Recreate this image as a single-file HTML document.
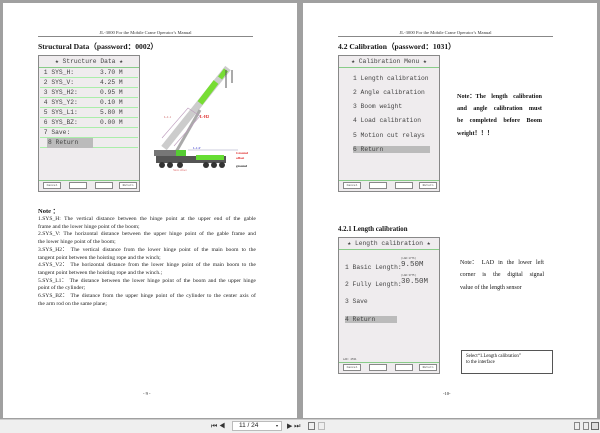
<!DOCTYPE html>
<html><head><meta charset="utf-8"><style>
*{margin:0;padding:0;box-sizing:border-box}
body{width:600px;height:433px;background:#a0a0a0;position:relative;overflow:hidden;font-family:"Liberation Serif",serif;color:#111}
.pg{position:absolute;top:3px;width:294px;height:415px;background:#fff}
.a{position:absolute;white-space:nowrap}
.hdr{position:absolute;left:35px;width:215px;top:27px;border-bottom:1px solid #888;font-size:4.6px;text-align:center;padding-bottom:1px;color:#333}
.t{font-weight:bold;font-size:7.6px}
.scr{position:absolute;width:102px;height:137px;background:#efecee;border:1px solid #888;font-family:"Liberation Mono",monospace;color:#444}
.g{position:absolute;left:0;right:0;height:1px;background:#8c8}
.btns{position:absolute;left:2px;right:2px;bottom:2px;height:7px}
.btns i{position:absolute;top:0;width:18px;height:7px;border:1px solid #888;background:#fff;font-size:3px;font-style:normal;text-align:center;line-height:5px}
.row{position:absolute;left:1px;right:1px;height:10px;border-bottom:1px solid #aea;font-size:6.3px;line-height:10px}
.hl{background:#bbb}
.note{position:absolute;left:35px;top:213px;width:218px;font-size:5.6px;line-height:7.7px;color:#222}
.note div{display:flex;justify-content:space-between;white-space:nowrap}
.tb{position:absolute;left:0;top:419px;width:600px;height:14px;background:#efefef;border-top:1px solid #ccc}
.j div{display:flex;justify-content:space-between;white-space:nowrap}
</style></head><body>
<div class="pg" style="left:3px">
<div class="hdr">JL-3000 For the Mobile Crane Operator’s Manual</div>
<div class="a t" style="left:35px;top:38px">Structural Data（password：0002）</div>
<div class="scr" style="left:35px;top:52px">
 <div class="a" style="left:0;width:100px;text-align:center;top:2px;font-size:6.3px">★ Structure Data ★</div>
 <div class="g" style="top:11px"></div>
 <div class="row" style="top:12px">&nbsp;1 SYS_H:<span class="a" style="left:60px">3.70 M</span></div>
 <div class="row" style="top:22px">&nbsp;2 SYS_V:<span class="a" style="left:60px">4.25 M</span></div>
 <div class="row" style="top:32px">&nbsp;3 SYS_H2:<span class="a" style="left:60px">0.95 M</span></div>
 <div class="row" style="top:42px">&nbsp;4 SYS_Y2:<span class="a" style="left:60px">0.10 M</span></div>
 <div class="row" style="top:52px">&nbsp;5 SYS_L1:<span class="a" style="left:60px">5.80 M</span></div>
 <div class="row" style="top:62px">&nbsp;6 SYS_BZ:<span class="a" style="left:60px">0.00 M</span></div>
 <div class="row" style="top:72px">&nbsp;7 Save:</div>
 <div class="row" style="top:82px"><span class="hl" style="display:inline-block;width:46px;margin-left:7px;padding-left:1px">8 Return</span></div>
 <div class="g" style="top:124px"></div>
 <div class="btns"><i style="left:2px">Cancel</i><i style="left:28px"></i><i style="left:54px"></i><i style="left:78px">Return</i></div>
</div>
<svg class="a" style="left:145px;top:55px" width="110" height="140" viewBox="0 0 110 140">
 <line x1="16" y1="90" x2="80" y2="10" stroke="#ccc" stroke-width="7"/>
 <line x1="52" y1="45" x2="68" y2="24" stroke="#7d3" stroke-width="6"/>
 <line x1="72" y1="20" x2="78" y2="12" stroke="#7d3" stroke-width="5"/>
 <line x1="78" y1="12" x2="78" y2="30" stroke="#555" stroke-width="1"/>
 <line x1="84" y1="12" x2="84" y2="25" stroke="#555" stroke-width="1"/>
 <line x1="28" y1="94" x2="52" y2="52" stroke="#aaa" stroke-width="3"/>
 <polyline points="14,80 40,50 52,58 26,88" fill="none" stroke="#b9b" stroke-width=".6"/>
 <text x="16" y="60" font-size="3.5" fill="#c66">L-L1</text>
 <text x="52" y="60" font-size="4" fill="#d22" font-weight="bold">L-H2</text>
 <rect x="6" y="92" width="22" height="6" fill="#777"/>
 <rect x="28" y="92" width="10" height="10" fill="#5c3"/>
 <rect x="8" y="98" width="70" height="7" fill="#555"/>
 <rect x="48" y="97" width="28" height="5" fill="#6d3"/>
 <circle cx="14" cy="107" r="3" fill="#333"/><circle cx="22" cy="107" r="3" fill="#333"/><circle cx="32" cy="107" r="3" fill="#333"/><circle cx="58" cy="107" r="3" fill="#333"/><circle cx="66" cy="107" r="3" fill="#333"/><circle cx="74" cy="107" r="3" fill="#333"/>
 <line x1="40" y1="92" x2="90" y2="92" stroke="#99b" stroke-width=".5"/>
 <text x="45" y="91" font-size="3.5" fill="#33c">L-LP</text>
 <text x="88" y="96" font-size="3.5" fill="#d22" font-weight="bold">Ground</text>
 <text x="88" y="101" font-size="3.5" fill="#d22" font-weight="bold">offset</text>
 <text x="88" y="109" font-size="3.5" fill="#222" font-weight="bold">ground</text>
 <text x="25" y="113" font-size="3" fill="#d66">Slew offset</text>
</svg>
<div class="a t" style="left:35px;top:202px;font-size:6.5px">Note ：</div>
<div class="note">
<div><span>1.SYS_H:</span><span>The</span><span>vertical</span><span>distance</span><span>between</span><span>the</span><span>hinge</span><span>point</span><span>at</span><span>the</span><span>upper</span><span>end</span><span>of</span><span>the</span><span>gable</span></div>
<div style="display:block">frame and the lower hinge point of the boom;</div>
<div><span>2.SYS_V:</span><span>The</span><span>horizontal</span><span>distance</span><span>between</span><span>the</span><span>upper</span><span>hinge</span><span>point</span><span>of</span><span>the</span><span>gable</span><span>frame</span><span>and</span></div>
<div style="display:block">the lower hinge point of the boom;</div>
<div><span>3.SYS_H2：</span><span>The</span><span>vertical</span><span>distance</span><span>from</span><span>the</span><span>lower</span><span>hinge</span><span>point</span><span>of</span><span>the</span><span>main</span><span>boom</span><span>to</span><span>the</span></div>
<div style="display:block">tangent point between the hoisting rope and the winch;</div>
<div><span>4.SYS_V2：</span><span>The</span><span>horizontal</span><span>distance</span><span>from</span><span>the</span><span>lower</span><span>hinge</span><span>point</span><span>of</span><span>the</span><span>main</span><span>boom</span><span>to</span><span>the</span></div>
<div style="display:block">tangent point between the hoisting rope and the winch.;</div>
<div><span>5.SYS_L1：</span><span>The</span><span>distance</span><span>between</span><span>the</span><span>lower</span><span>hinge</span><span>point</span><span>of</span><span>the</span><span>boom</span><span>and</span><span>the</span><span>upper</span><span>hinge</span></div>
<div style="display:block">point of the cylinder;</div>
<div><span>6.SYS_BZ：</span><span>The</span><span>distance</span><span>from</span><span>the</span><span>upper</span><span>hinge</span><span>point</span><span>of</span><span>the</span><span>cylinder</span><span>to</span><span>the</span><span>center</span><span>axis</span><span>of</span></div>
<div style="display:block">the arm rod on the same plane;</div>
</div>
<div class="a" style="left:140px;top:388px;font-size:4.5px">- 9 -</div>
</div>

<div class="pg" style="left:303px">
<div class="hdr">JL-3000 For the Mobile Crane Operator’s Manual</div>
<div class="a t" style="left:35px;top:38px">4.2 Calibration（password：1031）</div>
<div class="scr" style="left:35px;top:52px;font-size:6.3px">
 <div class="a" style="left:0;width:100px;text-align:center;top:2px">★ Calibration Menu ★</div>
 <div class="g" style="top:11px"></div>
 <div class="a" style="left:14px;top:19px">1 Length calibration</div>
 <div class="a" style="left:14px;top:33px">2 Angle calibration</div>
 <div class="a" style="left:14px;top:47px">3 Boom weight</div>
 <div class="a" style="left:14px;top:61px">4 Load calibration</div>
 <div class="a" style="left:14px;top:76px">5 Motion cut relays</div>
 <div class="a hl" style="left:14px;top:90px;width:77px;height:7px;line-height:7px">6 Return</div>
 <div class="g" style="top:124px"></div>
 <div class="btns"><i style="left:2px">Cancel</i><i style="left:28px"></i><i style="left:54px"></i><i style="left:78px">Return</i></div>
</div>
<div class="a j" style="left:154px;top:88px;font-size:6.2px;font-weight:bold;line-height:12.2px;width:85px">
<div><span>Note：The</span><span>length</span><span>calibration</span></div>
<div><span>and</span><span>angle</span><span>calibration</span><span>must</span></div>
<div><span>be</span><span>completed</span><span>before</span><span>Boom</span></div>
<div style="display:block">weight！！！</div>
</div>
<div class="a t" style="left:35px;top:223px;font-size:6.8px">4.2.1 Length calibration</div>
<div class="scr" style="left:35px;top:234px;font-size:6.3px">
 <div class="a" style="left:0;width:100px;text-align:center;top:2px">★ Length calibration ★</div>
 <div class="g" style="top:11px"></div>
 <div class="a" style="left:6px;top:26px">1 Basic Length:</div>
 <div class="a" style="left:62px;top:19px;font-size:2.5px">(LAD:1776)</div>
 <div class="a" style="left:62px;top:23px;font-size:7.5px">9.50M</div>
 <div class="a" style="left:6px;top:43px">2 Fully Length:</div>
 <div class="a" style="left:62px;top:36px;font-size:2.5px">(LAD:3775)</div>
 <div class="a" style="left:62px;top:40px;font-size:7.5px">30.50M</div>
 <div class="a" style="left:6px;top:60px">3 Save</div>
 <div class="a hl" style="left:6px;top:78px;width:52px;height:7px;line-height:7px">4 Return</div>
 <div class="a" style="left:4px;top:120px;font-size:2.5px">LAD: 2531</div>
 <div class="g" style="top:124px"></div>
 <div class="btns"><i style="left:2px">Cancel</i><i style="left:28px"></i><i style="left:54px"></i><i style="left:78px">Return</i></div>
</div>
<div class="a j" style="left:157px;top:254px;font-size:6px;line-height:12.4px;width:84px">
<div><span>Note：</span><span>LAD</span><span>in</span><span>the</span><span>lower</span><span>left</span></div>
<div><span>corner</span><span>is</span><span>the</span><span>digital</span><span>signal</span></div>
<div style="display:block">value of the length sensor</div>
</div>
<div class="a" style="left:158px;top:347px;width:92px;height:24px;border:1px solid #555;font-size:4.8px;line-height:6px;padding:3px 4px">Select“1.Length calibration”<br>to the interface</div>
<div class="a" style="left:140px;top:388px;font-size:4.5px">-10-</div>
</div>

<div class="tb">
 <div class="a" style="left:211px;top:2px;font-size:7px;color:#333">⏮&nbsp;◀</div>
 <div class="a" style="left:232px;top:1px;width:50px;height:10px;background:#fff;border:1px solid #bbb;font-family:'Liberation Sans',sans-serif;font-size:6.5px;line-height:8px;padding-left:6px;color:#222">11 / 24<span style="float:right;margin-right:3px;font-size:4px">▾</span></div>
 <div class="a" style="left:287px;top:2px;font-size:7px;color:#333">▶&nbsp;⏭</div>
 <div class="a" style="left:308px;top:2px;width:7px;height:8px;border:1px solid #777"></div>
 <div class="a" style="left:318px;top:2px;width:7px;height:8px;border:1px solid #bbb"></div>
 <div class="a" style="left:574px;top:2px;width:6px;height:8px;border:1px solid #888"></div>
 <div class="a" style="left:583px;top:2px;width:6px;height:8px;border:1px solid #888"></div>
 <div class="a" style="left:591px;top:2px;width:8px;height:8px;border:1px solid #666;background:#ddd"></div>
</div>
</body></html>
